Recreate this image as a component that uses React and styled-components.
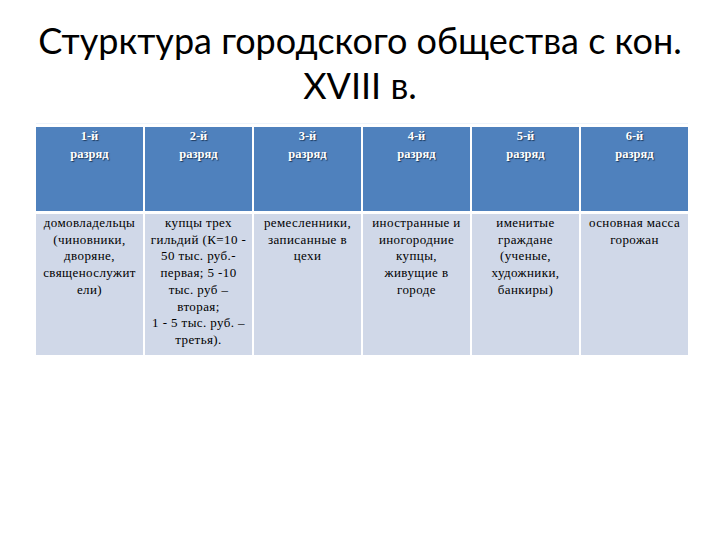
import React from "react";
import styled, { createGlobalStyle } from "styled-components";

const Global = createGlobalStyle`
  html, body { margin: 0; padding: 0; background: #ffffff; }
  body { width: 720px; height: 540px; overflow: hidden; }
`;

const Page = styled.div`
  width: 720px;
  height: 540px;
  display: flex;
  flex-direction: column;
  align-items: center;
  padding-top: 18px;
  box-sizing: border-box;
`;

const Title = styled.h1`
  margin: 0;
  font-family: "Lato", "Open Sans", sans-serif;
  font-weight: 400;
  font-size: 36px;
  line-height: 45px;
  letter-spacing: 0px;
  color: #000;
  text-align: center;
  width: 700px;
  white-space: nowrap;
`;

const TitleLine = styled.span`
  display: block;
  height: 45px;
`;

const Table = styled.div`
  margin-top: 15px;
  margin-left: 4px;
  width: 652px;
  display: grid;
  grid-template-columns: repeat(6, 1fr);
  column-gap: 2px;
  row-gap: 3px;
  border-top: 1px solid #eef4fb;
  padding-top: 3px;
`;

const HeadCell = styled.div`
  background: #4f81bd;
  height: 84px;
  padding-top: 0px;
  box-sizing: border-box;
  font-family: "Liberation Serif", "Times New Roman", serif;
  font-weight: 700;
  font-size: 12.5px;
  line-height: 18px;
  color: #ffffff;
  text-shadow: 1px 1px 1px #1f3b5e;
  text-align: center;
`;

const BodyCell = styled.div`
  background: #d0d8e8;
  height: 141px;
  padding-top: 1px;
  box-sizing: border-box;
  font-family: "Liberation Serif", "Times New Roman", serif;
  font-size: 13px;
  line-height: 16.7px;
  letter-spacing: 0.4px;
  color: #000;
  text-align: center;
`;

const heads = ["1-й", "2-й", "3-й", "4-й", "5-й", "6-й"];

const bodies = [
  ["домовладельцы", "(чиновники,", "дворяне,", "священослужит", "ели)"],
  ["купцы трех", "гильдий (К=10 -", "50 тыс. руб.-", "первая; 5 -10", "тыс. руб –", "вторая;", "1 - 5 тыс. руб. –", "третья)."],
  ["ремесленники,", "записанные в", "цехи"],
  ["иностранные и", "иногородние", "купцы,", "живущие в", "городе"],
  ["именитые", "граждане", "(ученые,", "художники,", "банкиры)"],
  ["основная масса", "горожан"],
];

const Lines = ({ lines }) =>
  lines.map((l, i) => (
    <React.Fragment key={i}>
      {l}
      {i < lines.length - 1 && <br />}
    </React.Fragment>
  ));

export default function App() {
  return (
    <>
      <Global />
      <Page>
        <Title>
          <TitleLine>Стурктура городского общества с кон.</TitleLine>
          <TitleLine>XVIII в.</TitleLine>
        </Title>
        <Table>
          {heads.map((h) => (
            <HeadCell key={h}>
              {h}
              <br />
              разряд
            </HeadCell>
          ))}
          {bodies.map((b, i) => (
            <BodyCell key={i}>
              <Lines lines={b} />
            </BodyCell>
          ))}
        </Table>
      </Page>
    </>
  );
}
